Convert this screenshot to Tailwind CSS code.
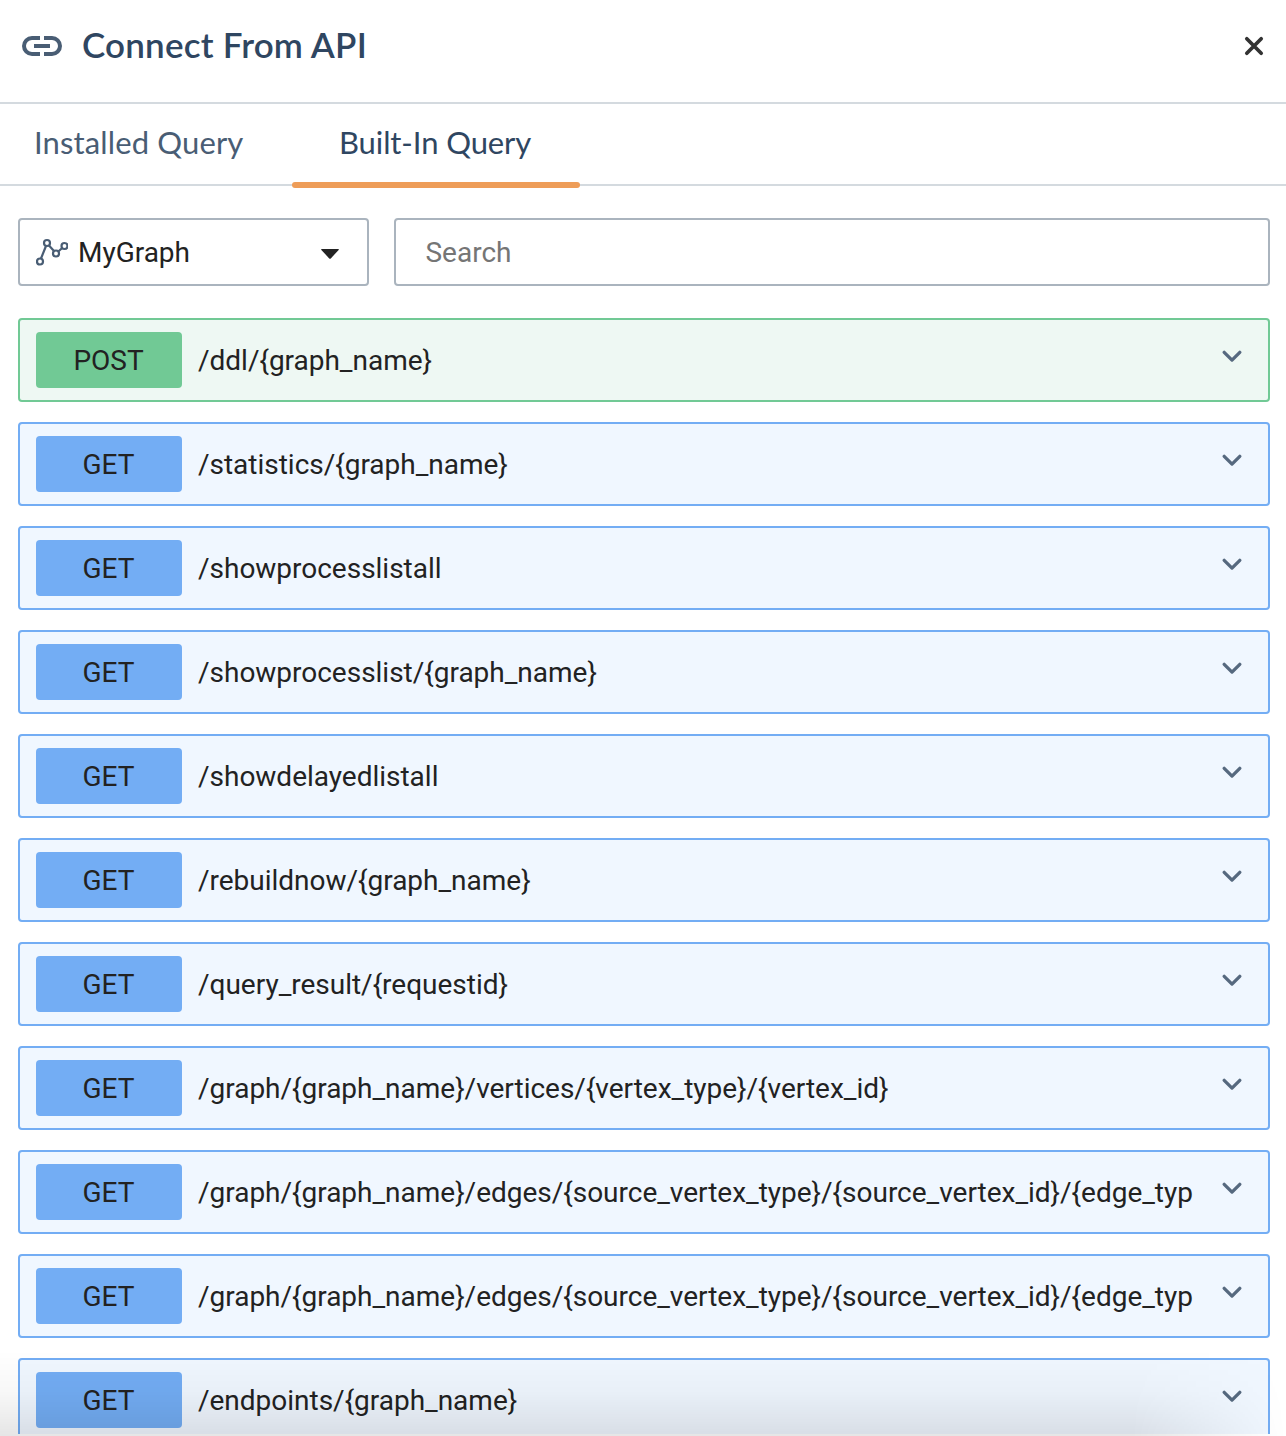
<!DOCTYPE html>
<html lang="en">
<head>
<meta charset="utf-8">
<title>Connect From API</title>
<script src="https://cdn.jsdelivr.net/npm/@tailwindcss/browser@4"></script>
</head>
<body class="bg-white">
<div class="relative flex h-[1436px] w-[1286px] flex-col overflow-hidden bg-white font-['Roboto',sans-serif] text-[28px] tracking-[-0.014px] text-[#222222]">
  <header class="flex h-[104px] shrink-0 items-start border-b-2 border-[#d4dadf] pr-5 pl-[22px]">
    <svg class="mt-9 h-5 w-10 shrink-0" viewBox="0 0 40 20" fill="none" stroke="#495d74" stroke-width="4"><path d="M18 2h-8a8 8 0 0 0 0 16h8M22 2h8a8 8 0 0 1 0 16h-8M12 10h16"/></svg>
    <h1 class="mt-[18px] ml-5 font-['Lato',sans-serif] text-[35px] leading-[52px] font-semibold tracking-[0.2px] whitespace-nowrap text-[#2f4661]">Connect From API</h1>
    <svg class="mt-[35px] ml-auto h-[22px] w-6" viewBox="0 0 24 22" fill="none" stroke="#333" stroke-width="3.700" stroke-linecap="round"><path d="M4.800 3.800l14.400 14.400M19.200 3.800L4.800 18.200"/></svg>
  </header>
  <nav class="flex h-[82px] shrink-0 border-b-2 border-[#d4dadf] font-['Lato',sans-serif] text-[31px] leading-[76px] whitespace-nowrap">
    <div class="w-[292px] pl-[34px] font-normal tracking-[0.13px] text-[#495d74]">Installed Query</div>
    <div class="relative w-72 pl-[47px] font-normal tracking-[-0.1px] text-[#2f4661]">Built-In Query<span class="absolute top-[78px] left-0 h-1.5 w-72 rounded-[3px] bg-[#ee9d58]"></span></div>
  </nav>
  <div class="flex shrink-0 gap-[25px] pt-8 pr-4 pl-[18px]">
    <div class="flex h-[68px] w-[351px] items-center rounded-[4px] border-2 border-[#aab4be] pr-7 pl-4">
      <svg class="h-7 w-8" viewBox="0 0 32 28" fill="none" stroke="#495d74" stroke-width="2.200"><circle cx="4" cy="23.500" r="3"/><circle cx="11" cy="5" r="3"/><circle cx="20" cy="15.500" r="3"/><circle cx="28.500" cy="8" r="3"/><path d="M5 20.500L10 8M13 7.500L18 13M22.300 13.500L26.200 10"/></svg>
      <span class="ml-2.5 pt-0.5">MyGraph</span>
      <svg class="mt-[3px] ml-auto h-2.5 w-[18px]" viewBox="0 0 18 10" fill="#222"><path d="M0.800 0h16.400q1.200 0 .4 1L10 9.200q-1 1-2 0L.4 1Q-.4 0 .8 0z"/></svg>
    </div>
    <div class="flex h-[68px] flex-1 items-center rounded-[4px] border-2 border-[#aab4be] pt-0.5 pl-[29.500px] text-[#757575]">Search</div>
  </div>
  <main id="endpoints" class="flex h-[1148px] flex-col gap-5 overflow-hidden pt-8 pr-4 pl-[18px]"></main>
  <div class="absolute inset-x-0 bottom-0 h-[86px] bg-linear-to-b from-black/0 via-black/3 to-black/10 mask-r-from-88% mask-r-to-100%"></div>
</div>
<template id="row">
  <div class="flex h-[84px] shrink-0 items-start rounded-[4px] border-2 border-[#73adf4] bg-[#f0f7ff] pt-3 pl-4">
    <span class="h-14 w-[146px] shrink-0 rounded-[4px] bg-[#73adf4] pr-px text-center leading-[58px]"></span>
    <span class="ml-4 w-[995px] overflow-hidden leading-[58px] whitespace-nowrap"></span>
    <svg class="mt-[18px] ml-[29px] h-3 w-5 shrink-0" viewBox="0 0 20 12" fill="none" stroke="#56697f" stroke-width="3.300" stroke-linecap="round" stroke-linejoin="round"><path d="M2.200 2.300L10 10.100 17.800 2.300"/></svg>
  </div>
</template>
<script>
const endpoints = [
  ['POST', '/ddl/{graph_name}'],
  ['GET', '/statistics/{graph_name}'],
  ['GET', '/showprocesslistall'],
  ['GET', '/showprocesslist/{graph_name}'],
  ['GET', '/showdelayedlistall'],
  ['GET', '/rebuildnow/{graph_name}'],
  ['GET', '/query_result/{requestid}'],
  ['GET', '/graph/{graph_name}/vertices/{vertex_type}/{vertex_id}'],
  ['GET', '/graph/{graph_name}/edges/{source_vertex_type}/{source_vertex_id}/{edge_typ'],
  ['GET', '/graph/{graph_name}/edges/{source_vertex_type}/{source_vertex_id}/{edge_typ'],
  ['GET', '/endpoints/{graph_name}']
];
for (const [method, path] of endpoints) {
  const row = document.getElementById('row').content.cloneNode(true).firstElementChild;
  const [badge, label] = row.querySelectorAll('span');
  badge.textContent = method;
  label.textContent = path;
  if (method === 'POST') {
    row.classList.replace('border-[#73adf4]', 'border-[#71c995]');
    row.classList.replace('bg-[#f0f7ff]', 'bg-[#eef8f3]');
    badge.classList.replace('bg-[#73adf4]', 'bg-[#71c995]');
  }
  document.getElementById('endpoints').append(row);
}
</script>
</body>
</html>
